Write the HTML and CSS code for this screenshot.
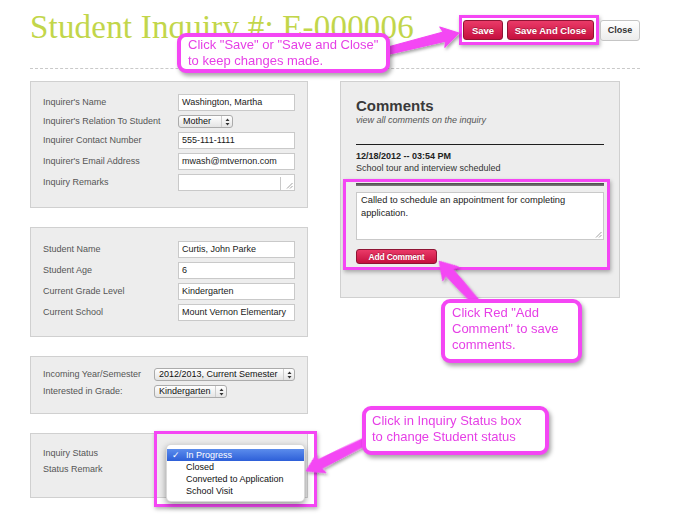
FILE: index.html
```html
<!DOCTYPE html>
<html lang="en">
<head>
<meta charset="utf-8">
<title>Student Inquiry</title>
<link rel="stylesheet" href="styles.css">
</head>
<body>
<div class="page">
  <header class="top">
    <h1 class="title">Student Inquiry #: E-000006</h1>
    <div class="actions">
      <div class="hl hl-save">
        <button class="btn red save">Save</button>
        <button class="btn red saveclose">Save And Close</button>
      </div>
      <button class="btn plain">Close</button>
    </div>
  </header>

  <main class="main">
    <div class="leftcol">
      <section class="panel p1">
        <div class="row"><span class="lbl">Inquirer's Name</span><span class="input">Washington, Martha</span></div>
        <div class="row"><span class="lbl">Inquirer's Relation To Student</span><span class="select w-mother">Mother<span class="arr"><svg width="5" height="8" viewBox="0 0 5 8"><path d="M2.5 0.5 L4.5 3 L0.5 3 Z M0.5 5 L4.5 5 L2.5 7.5 Z" fill="#333"/></svg></span></span></div>
        <div class="row"><span class="lbl">Inquirer Contact Number</span><span class="input">555-111-1111</span></div>
        <div class="row"><span class="lbl">Inquirer's Email Address</span><span class="input">mwash@mtvernon.com</span></div>
        <div class="row"><span class="lbl">Inquiry Remarks</span><span class="input remarks"><span class="divider"></span><svg class="grip" width="7" height="7" viewBox="0 0 7 7"><path d="M6.5 1 L1 6.5 M6.5 4 L4 6.5" stroke="#888" stroke-width="0.8"/></svg></span></div>
      </section>

      <section class="panel p2">
        <div class="row"><span class="lbl">Student Name</span><span class="input">Curtis, John Parke</span></div>
        <div class="row"><span class="lbl">Student Age</span><span class="input">6</span></div>
        <div class="row"><span class="lbl">Current Grade Level</span><span class="input">Kindergarten</span></div>
        <div class="row"><span class="lbl">Current School</span><span class="input">Mount Vernon Elementary</span></div>
      </section>

      <section class="panel p3">
        <div class="row"><span class="lbl narrow">Incoming Year/Semester</span><span class="select w-year">2012/2013, Current Semester<span class="arr"><svg width="5" height="8" viewBox="0 0 5 8"><path d="M2.5 0.5 L4.5 3 L0.5 3 Z M0.5 5 L4.5 5 L2.5 7.5 Z" fill="#333"/></svg></span></span></div>
        <div class="row"><span class="lbl narrow">Interested in Grade:</span><span class="select w-grade">Kindergarten<span class="arr"><svg width="5" height="8" viewBox="0 0 5 8"><path d="M2.5 0.5 L4.5 3 L0.5 3 Z M0.5 5 L4.5 5 L2.5 7.5 Z" fill="#333"/></svg></span></span></div>
      </section>

      <section class="panel p4">
        <div class="srow">Inquiry Status</div>
        <div class="srow">Status Remark</div>
        <div class="hl status-hl"></div>
        <ul class="popup">
          <li class="on"><span class="chk">✓</span>In Progress</li>
          <li>Closed</li>
          <li>Converted to Application</li>
          <li>School Visit</li>
        </ul>
      </section>
    </div>

    <div class="rightcol">
      <section class="panel comments">
        <h2 class="ctitle">Comments</h2>
        <p class="csub">view all comments on the inquiry</p>
        <div class="entry">
          <div class="cdate">12/18/2012 -- 03:54 PM</div>
          <div class="cnote">School tour and interview scheduled</div>
        </div>
        <div class="hl cform">
          <div class="bar"></div>
          <div class="textarea">Called to schedule an appointment for completing application.<svg class="grip" width="7" height="7" viewBox="0 0 7 7"><path d="M6.5 1 L1 6.5 M6.5 4 L4 6.5" stroke="#888" stroke-width="0.8"/></svg></div>
          <button class="btn red addc">Add Comment</button>
        </div>
      </section>
    </div>
  </main>

  <svg class="arrows" width="685" height="520" viewBox="0 0 685 520">
    <defs>
      <filter id="sh" x="-30%" y="-30%" width="160%" height="160%">
        <feDropShadow dx="1.5" dy="2" stdDeviation="1.5" flood-color="#000" flood-opacity="0.35"/>
      </filter>
    </defs>
    <g fill="#f446f4" stroke="#f446f4" stroke-width="1" stroke-linejoin="round" filter="url(#sh)">
      <g transform="translate(387,51) rotate(-14.04)">
        <circle cx="0" cy="0" r="3.6"/>
        <polygon points="0,-3.6 59,-4.8 57,-10.5 74,0 57,10.5 59,4.8 0,3.6"/>
      </g>
      <g transform="translate(476,302) rotate(-132.06)">
        <circle cx="0" cy="0" r="3.6"/>
        <polygon points="0,-3.6 40,-4.8 38,-10.5 55,0 38,10.5 40,4.8 0,3.6"/>
      </g>
      <g transform="translate(366,441) rotate(153.43)">
        <circle cx="0" cy="0" r="3.6"/>
        <polygon points="0,-3.6 52,-4.8 50,-10.5 67,0 50,10.5 52,4.8 0,3.6"/>
      </g>
    </g>
  </svg>

  <div class="callout c1">Click "Save" or "Save and Close"<br>to keep changes made.</div>
  <div class="callout c2">Click Red "Add<br>Comment" to save<br>comments.</div>
  <div class="callout c3">Click in Inquiry Status box<br>to change Student status</div>
</div>
</body>
</html>
```

FILE: styles.css
```css
* { box-sizing: border-box; margin: 0; padding: 0; }
html, body { background: #fff; }
body {
  font-family: "Liberation Sans", Arial, sans-serif;
  font-size: 9px;
  color: #555;
  width: 685px;
  height: 520px;
  overflow: hidden;
}
.page {
  position: relative;
  width: 685px;
  height: 520px;
  padding: 0 45px 0 30px;
}

/* header */
.top {
  display: flex;
  justify-content: space-between;
  align-items: flex-start;
  height: 68px;
}
.title {
  font-family: "Liberation Serif", "Times New Roman", serif;
  font-weight: normal;
  font-size: 33px;
  line-height: 40px;
  color: #c2d64a;
  margin-top: 7px;
  letter-spacing: 0.2px;
  white-space: nowrap;
}
.actions {
  display: flex;
  align-items: center;
  margin-top: 15px;
}
.hl {
  border: 3px solid #f446f4;
  box-shadow: 1px 2px 4px rgba(0, 0, 0, 0.3);
}
.hl-save {
  display: flex;
  gap: 4px;
  padding: 2px 2px 2px 1px;
}
.btn {
  font-family: "Liberation Sans", Arial, sans-serif;
  font-weight: bold;
  border-radius: 3px;
  white-space: nowrap;
}
.red {
  background: linear-gradient(#ea3a68, #c6103e);
  border: 1px solid #8e1434;
  color: #fff;
  text-shadow: 0 -1px 0 rgba(0, 0, 0, 0.25);
}
.hl-save .red { height: 20px; font-size: 9.5px; }
.save { width: 40px; }
.saveclose { width: 87px; }
.plain {
  height: 21px;
  width: 40px;
  margin-left: 1px;
  background: linear-gradient(#fff, #ececec);
  border: 1px solid #c5c5c5;
  color: #333;
  font-size: 9px;
}

/* main */
.main {
  display: flex;
  border-top: 1px dashed #c9c9c9;
  padding-top: 12px;
}
.leftcol {
  width: 278px;
  display: flex;
  flex-direction: column;
  gap: 19px;
}
.rightcol {
  width: 280px;
  margin-left: 32px;
}
.panel {
  background: #ededed;
  border: 1px solid #d0d0d0;
}
.p1 { padding: 12px 12px 16px 12px; }
.p2 { padding: 13px 12px 15px 12px; }
.p3 { padding: 11px 12px 15px 12px; }
.p4 { position: relative; height: 65px; padding: 11px 12px 0 12px; }

.row {
  display: flex;
  align-items: center;
  margin-bottom: 4px;
}
.row:last-child { margin-bottom: 0; }
.lbl {
  width: 135px;
  flex: none;
  line-height: 11px;
  color: #555;
  white-space: nowrap;
}
.lbl.narrow { width: 111px; }
.input {
  display: block;
  width: 118px;
  height: 17px;
  border: 1px solid #c9c9c9;
  background: #fff;
  padding: 0 3px;
  line-height: 15px;
  color: #1a1a1a;
  white-space: nowrap;
  overflow: hidden;
}
.remarks { position: relative; }
.remarks .divider {
  position: absolute;
  left: 101px;
  top: 2px;
  bottom: 0;
  border-left: 1px solid #c9c9c9;
}
.grip {
  position: absolute;
  right: 1px;
  bottom: 1px;
}
.select {
  display: flex;
  align-items: center;
  height: 13px;
  border: 1px solid #ababab;
  border-radius: 3px;
  background: linear-gradient(#ffffff, #e4e4e4);
  padding-left: 4px;
  color: #111;
  line-height: 11px;
  white-space: nowrap;
  overflow: hidden;
}
.select .arr {
  margin-left: auto;
  width: 11px;
  height: 100%;
  border-left: 1px solid #cdcdcd;
  display: flex;
  align-items: center;
  justify-content: center;
  flex: none;
}
.w-mother { width: 55px; }
.w-year { width: 142px; }
.w-grade { width: 73px; }

.srow { line-height: 16px; color: #555; }

.status-hl {
  position: absolute;
  left: 123px;
  top: -3px;
  width: 163px;
  height: 76px;
}
.popup {
  position: absolute;
  left: 135px;
  top: 10px;
  width: 139px;
  list-style: none;
  background: #fff;
  border: 1px solid rgba(0, 0, 0, 0.15);
  border-radius: 5px;
  box-shadow: 0 3px 7px rgba(0, 0, 0, 0.4);
  padding: 4px 0 4px 0;
}
.popup li {
  height: 12px;
  line-height: 12px;
  padding-left: 19px;
  color: #111;
  position: relative;
  white-space: nowrap;
}
.popup li.on {
  background: linear-gradient(#5b8cec, #2d5fd8);
  color: #fff;
}
.chk {
  position: absolute;
  left: 5px;
  top: 0;
  font-family: "DejaVu Sans", sans-serif;
  font-size: 9px;
}

/* comments */
.comments {
  padding: 15px 15px 27px 15px;
}
.ctitle {
  font-size: 15px;
  line-height: 18px;
  font-weight: bold;
  color: #3a3a3a;
}
.csub {
  font-style: italic;
  line-height: 11px;
  color: #555;
}
.entry {
  margin-top: 18px;
  border-top: 1px solid #1e1e1e;
  padding-top: 5px;
}
.cdate {
  font-weight: bold;
  line-height: 12px;
  color: #222;
}
.cnote {
  line-height: 12px;
  color: #333;
}
.cform {
  margin: 5px -6px 0 -13px;
  padding: 1px 3px 3px 10px;
}
.bar {
  height: 3px;
  background: linear-gradient(#4a4a4a, #7a7a7a);
}
.textarea {
  position: relative;
  margin-top: 6px;
  height: 48px;
  background: #fff;
  border: 1px solid #c9c9c9;
  padding: 1px 4px;
  font-size: 9.3px;
  line-height: 12.5px;
  color: #222;
}
.addc {
  display: block;
  margin-top: 9px;
  width: 81px;
  height: 15px;
  font-size: 8.5px;
  letter-spacing: -0.2px;
}

/* annotations */
.arrows {
  position: absolute;
  left: 0;
  top: 0;
  pointer-events: none;
}
.callout {
  position: absolute;
  background: #fff;
  border: 4px solid #f446f4;
  border-radius: 9px;
  box-shadow: 2px 3px 4px rgba(0, 0, 0, 0.35);
  color: #e63fe6;
  font-family: "Liberation Sans", Arial, sans-serif;
  font-size: 13px;
  line-height: 16px;
  white-space: nowrap;
}
.c1 { left: 177px; top: 33px; width: 213px; height: 40px; padding: 0 0 0 7px; line-height: 15.5px; }
.c2 { left: 441px; top: 299px; width: 141px; height: 64px; padding: 2px 0 0 7px; }
.c3 { left: 362px; top: 406px; width: 187px; height: 49px; padding: 3px 0 0 6px; }
```
